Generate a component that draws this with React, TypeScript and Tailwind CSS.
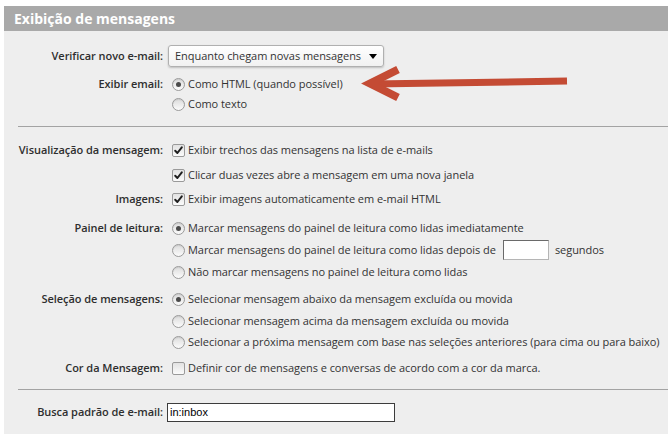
import React from "react";

const Radio = ({ checked = false }: { checked?: boolean }) => (
  <span className="w-[13px] h-[13px] rounded-full border border-[#9a9a9a] bg-linear-to-b from-[#dcdcdc] to-[#fbfbfb] flex items-center justify-center shrink-0 shadow-[inset_0_1px_1px_rgba(0,0,0,0.08)]">
    {checked && <span className="w-[5px] h-[5px] rounded-full bg-[#4a4a4a]" />}
  </span>
);

const Check = ({ checked = false }: { checked?: boolean }) => (
  <span className="w-[13px] h-[13px] rounded-[2px] border border-[#9a9a9a] bg-linear-to-b from-[#e2e2e2] to-[#fbfbfb] flex items-center justify-center shrink-0">
    {checked && (
      <svg width="11" height="11" viewBox="0 0 11 11">
        <path d="M2.2 5.8 L4.4 8 L8.8 2.4" fill="none" stroke="#1f1f1f" strokeWidth="2" strokeLinecap="round" strokeLinejoin="round" />
      </svg>
    )}
  </span>
);

const Row = ({
  label,
  className,
  children,
}: {
  label?: string;
  className: string;
  children: React.ReactNode;
}) => (
  <div className={className}>
    <div className="w-[159px] shrink-0 text-right font-semibold text-[#2e2e2e]">{label}</div>
    {children}
  </div>
);

const Opt = ({ radio, checked, children }: { radio?: boolean; checked?: boolean; children: React.ReactNode }) => (
  <div className="ml-[9px] flex items-center gap-[3px] whitespace-nowrap">
    {radio ? <Radio checked={checked} /> : <Check checked={checked} />}
    <span>{children}</span>
  </div>
);

export default function App() {
  return (
    <div className="w-[669px] h-[434px] bg-white pl-[4px] pt-[6px] pr-[1px] overflow-hidden font-['Open_Sans',sans-serif] text-[11px] tracking-[-0.05px] text-[#333333]">
      <div className="relative h-full bg-[#eeeeee]">
        <div className="h-[25px] bg-[#a9a9a9] pl-[10px] flex items-center text-white font-bold text-[14px] tracking-normal">
          Exibição de mensagens
        </div>

        <Row label="Verificar novo e-mail:" className="flex items-center h-[22px] mt-[14px]">
          <div className="ml-[5px] w-[216px] h-[22px] flex items-center border border-[#b0b0b0] rounded-[3px] bg-linear-to-b from-white to-[#f1f1f1] shadow-[0_1px_2px_rgba(0,0,0,0.2)] pl-[6px] pr-[6px]">
            <span className="whitespace-nowrap">Enquanto chegam novas mensagens</span>
            <span className="ml-auto w-0 h-0 border-l-[4px] border-r-[4px] border-t-[5px] border-l-transparent border-r-transparent border-t-black" />
          </div>
        </Row>

        <Row label="Exibir email:" className="flex items-center h-[20px] mt-[7px]">
          <Opt radio checked>Como HTML (quando possível)</Opt>
        </Row>
        <Row className="flex items-center h-[20px]">
          <Opt radio>Como texto</Opt>
        </Row>

        <div className="ml-[14px] mt-[12px] h-px bg-[#a3a3a3]" />

        <Row label="Visualização da mensagem:" className="flex items-center h-[20px] mt-[13px]">
          <Opt checked>Exibir trechos das mensagens na lista de e-mails</Opt>
        </Row>
        <Row className="flex items-center h-[20px] mt-[5px]">
          <Opt checked>Clicar duas vezes abre a mensagem em uma nova janela</Opt>
        </Row>
        <Row label="Imagens:" className="flex items-center h-[20px] mt-[4px]">
          <Opt checked>Exibir imagens automaticamente em e-mail HTML</Opt>
        </Row>

        <Row label="Painel de leitura:" className="flex items-center h-[20px] mt-[9px]">
          <Opt radio checked>Marcar mensagens do painel de leitura como lidas imediatamente</Opt>
        </Row>
        <Row className="flex items-center h-[20px] mt-[2px]">
          <Opt radio>
            <span className="flex items-center">
              Marcar mensagens do painel de leitura como lidas depois de
              <span className="inline-block ml-[7px] w-[46px] h-[20px] bg-white border border-t-[#6a6a6a] border-l-[#6a6a6a] border-r-[#b5b5b5] border-b-[#b5b5b5]" />
              <span className="ml-[6px]">segundos</span>
            </span>
          </Opt>
        </Row>
        <Row className="flex items-center h-[20px] mt-[2px]">
          <Opt radio>Não marcar mensagens no painel de leitura como lidas</Opt>
        </Row>

        <Row label="Seleção de mensagens:" className="flex items-center h-[20px] mt-[7px]">
          <Opt radio checked>Selecionar mensagem abaixo da mensagem excluída ou movida</Opt>
        </Row>
        <Row className="flex items-center h-[20px] mt-[2px]">
          <Opt radio>Selecionar mensagem acima da mensagem excluída ou movida</Opt>
        </Row>
        <Row className="flex items-center h-[20px] mt-[1px]">
          <Opt radio>Selecionar a próxima mensagem com base nas seleções anteriores (para cima ou para baixo)</Opt>
        </Row>

        <Row label="Cor da Mensagem:" className="flex items-center h-[20px] mt-[6px]">
          <Opt>Definir cor de mensagens e conversas de acordo com a cor da marca.</Opt>
        </Row>

        <div className="ml-[14px] mt-[11px] h-px bg-[#a3a3a3]" />

        <Row label="Busca padrão de e-mail:" className="flex items-center h-[20px] mt-[12px]">
          <div className="ml-[4px] w-[228px] h-[19px] bg-white border border-[#3c3c3c] flex items-center pl-[2px] font-['Liberation_Sans',sans-serif] text-[11px] tracking-normal text-black">
            in:inbox
          </div>
        </Row>

        <svg
          className="absolute left-0 top-0 pointer-events-none"
          width="669"
          height="434"
          viewBox="4 6 669 434"
        >
          <line x1="372" y1="84" x2="567" y2="81" stroke="#c44b34" strokeWidth="7" />
          <polyline points="398,69.5 370,83.5 398,97.5" fill="none" stroke="#c44b34" strokeWidth="8" strokeLinejoin="miter" strokeMiterlimit="10" />
        </svg>
      </div>
    </div>
  );
}
